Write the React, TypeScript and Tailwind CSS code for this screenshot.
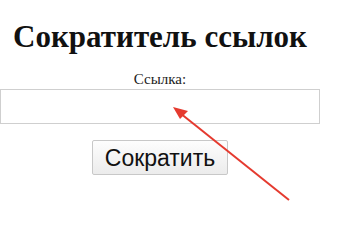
export default function App() {
  return (
    <div className="relative w-[360px] h-[202px] overflow-hidden bg-white">
      <div className="w-[320px] flex flex-col items-center">
        <h1 className="mt-[19px] text-[31px] leading-[36px] font-bold text-[#111] font-['Liberation_Serif',serif]">
          Сократитель ссылок
        </h1>
        <label className="mt-[16px] text-[15px] leading-[17px] text-[#222] font-['Liberation_Serif',serif]">
          Ссылка:
        </label>
        <input
          type="text"
          className="mt-[1px] w-[320px] h-[35px] border border-[#cfcfcf] bg-white outline-none"
        />
        <button className="mt-[16px] w-[136px] h-[35px] rounded-[2px] border border-[#c8c8c8] bg-gradient-to-b from-[#fdfdfd] to-[#ececec] text-[23px] leading-[32px] text-[#111] font-['Liberation_Sans',sans-serif]">
          Сократить
        </button>
      </div>
      <svg className="absolute left-0 top-0" width="360" height="202" viewBox="0 0 360 202">
        <line x1="289" y1="200" x2="180" y2="113" stroke="#e53a2f" strokeWidth="2" />
        <polygon points="173,107 188,111 180,119" fill="#e53a2f" />
      </svg>
    </div>
  );
}
